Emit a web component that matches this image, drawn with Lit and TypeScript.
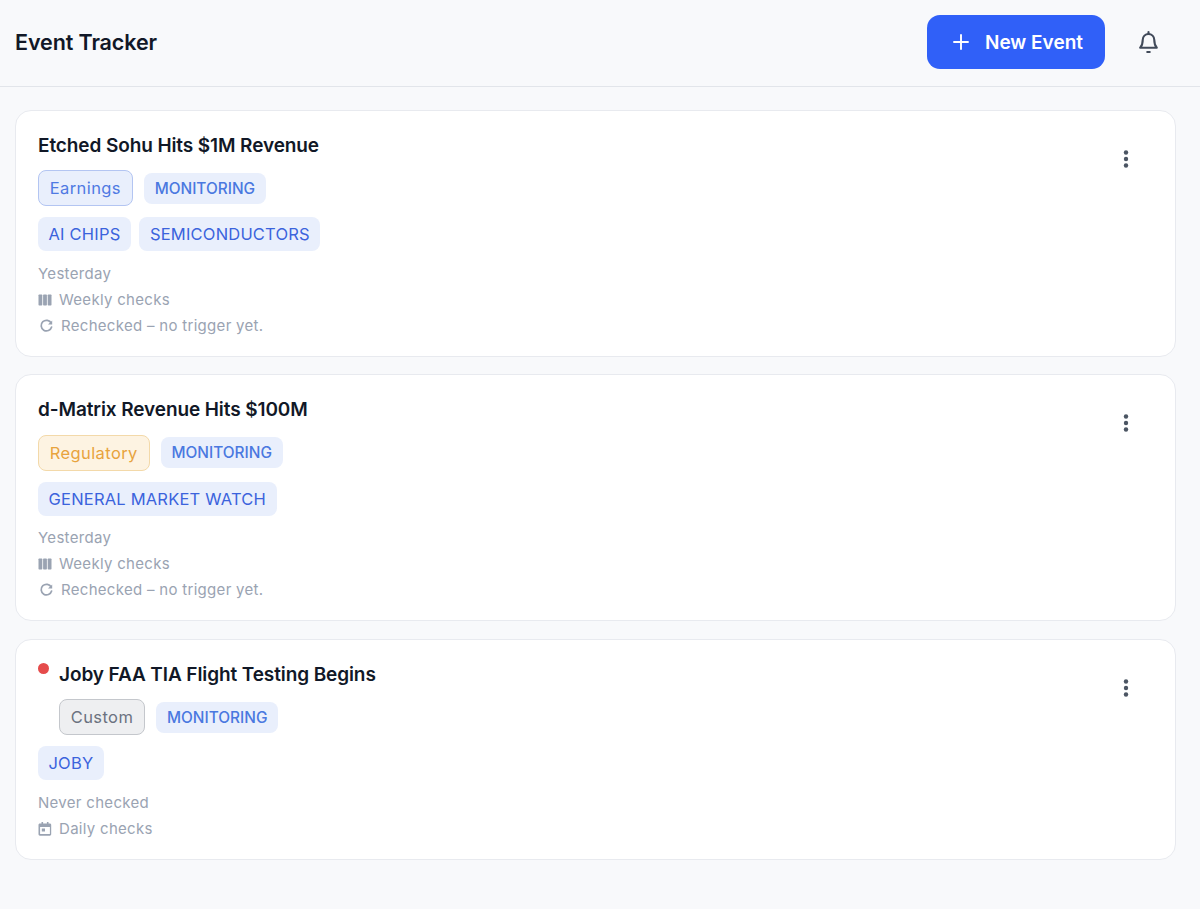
import { LitElement, html, css, svg } from "lit";
import { customElement } from "lit/decorators.js";

type Kind = "earnings" | "regulatory" | "custom";
interface Ev {
  title: string;
  kind: Kind;
  label: string;
  tags: string[];
  when: string;
  freq: string;
  freqIcon: "bars" | "cal";
  note?: string;
  dot?: boolean;
}

const events: Ev[] = [
  { title: "Etched Sohu Hits $1M Revenue", kind: "earnings", label: "Earnings", tags: ["AI CHIPS", "SEMICONDUCTORS"], when: "Yesterday", freq: "Weekly checks", freqIcon: "bars", note: "Rechecked – no trigger yet." },
  { title: "d-Matrix Revenue Hits $100M", kind: "regulatory", label: "Regulatory", tags: ["GENERAL MARKET WATCH"], when: "Yesterday", freq: "Weekly checks", freqIcon: "bars", note: "Rechecked – no trigger yet." },
  { title: "Joby FAA TIA Flight Testing Begins", kind: "custom", label: "Custom", tags: ["JOBY"], when: "Never checked", freq: "Daily checks", freqIcon: "cal", dot: true },
];

const bars = svg`<rect x="0.500" y="1.500" width="3.800" height="11" rx=".7"/><rect x="5.100" y="1.500" width="3.800" height="11" rx=".7"/><rect x="9.700" y="1.500" width="3.800" height="11" rx=".7"/>`;
const cal = svg`<path fill-rule="evenodd" d="M3.500 0h1.600v1.500h3.800V0h1.600v1.500h1.300c.8 0 1.400.6 1.400 1.400v9.400c0 .8-.6 1.400-1.400 1.400H1.900C1.100 13.700.5 13.100.5 12.300V2.900c0-.8.6-1.400 1.400-1.400h1.600V0zM2.100 5v7.100h9.800V5H2.100zM3.800 6.500h3.200v3H3.800z"/>`;

@customElement("app-root")
export class AppRoot extends LitElement {
  static styles = css`
    :host { display: block; min-height: 909px; background: #f8f9fb; font-family: Inter, "Liberation Sans", sans-serif; color: #111827; box-sizing: border-box; }
    .hdr { height: 84px; padding: 0 28px 2px 15px; border-bottom: 1px solid #e2e5ea; display: flex; align-items: center; gap: 19px; }
    .hdr h1 { margin: 0; flex: 1; font-size: 21.500px; font-weight: 600; line-height: 28px; letter-spacing: -0.1px; }
    .new { width: 178px; height: 54px; border: 0; border-radius: 13px; background: #3060f8; color: #fff; font: 600 19px Inter, sans-serif; display: flex; align-items: center; gap: 15px; padding: 0 0 0 25px; }
    .new svg { width: 18px; height: 18px; }
    .bell { width: 48px; height: 48px; display: flex; align-items: center; justify-content: center; }
    .bell svg { width: 19px; height: 22px; }
    .list { display: flex; flex-direction: column; gap: 17.500px; padding: 22.500px 24.500px 0 15px; }
    .card { background: #fff; border: 1px solid #e8eaef; border-radius: 16px; padding: 23px 25px 17px 22px; display: flex; align-items: flex-start; }
    .body { flex: 1; min-width: 0; }
    .title { display: flex; align-items: flex-start; height: 24px; }
    .title h2 { margin: 0; font-size: 19px; line-height: 24px; font-weight: 600; color: #111827; letter-spacing: -0.1px; }
    .dot { width: 11px; height: 11px; border-radius: 50%; background: #e54b4b; margin: 0 10px 0 0; flex: none; }
    .row1 { display: flex; align-items: center; gap: 11px; margin-top: 12.500px; height: 36px; }
    .row1.ind { margin-left: 21px; }
    .kind { height: 36px; box-sizing: border-box; display: flex; align-items: center; padding: 0 10.750px; border-radius: 8px; border: 1px solid; font-size: 16.500px; font-weight: 400; letter-spacing: .4px; }
    .earnings { background: #e9effc; border-color: #b3c5f2; color: #4f7ae3; }
    .regulatory { background: #fdf3e2; border-color: #f3d9a9; color: #e8a33d; }
    .custom { background: #eeeff1; border-color: #c4c7cc; color: #6b7280; }
    .status { height: 31px; display: flex; align-items: center; padding: 0 11px; border-radius: 8px; background: #e9effc; color: #4a78e0; font-size: 15.400px; font-weight: 500; }
    .tags { display: flex; gap: 8.500px; margin-top: 11px; }
    .tag { height: 34px; display: flex; align-items: center; padding: 0 10.500px; border-radius: 8px; background: #e9effc; color: #3b63dc; font-size: 16.500px; font-weight: 400; letter-spacing: .2px; }
    .meta { margin-top: 9.500px; color: #9aa3b2; font-size: 15px; line-height: 26px; letter-spacing: .3px; }
    .line { display: flex; align-items: center; gap: 7px; height: 26px; }
    .line svg { width: 14px; height: 14px; fill: #9aa3b2; flex: none; }
    .line svg.re { width: 16px; height: 16px; fill: none; }
    .kebab { width: 48px; height: 48px; margin-top: 1px; display: flex; align-items: center; justify-content: center; }
    .kebab svg { width: 6px; height: 20px; fill: #4b5563; }
  `;

  private item(e: Ev) {
    return html`<div class="card">
      <div class="body">
        <div class="title">${e.dot ? html`<span class="dot"></span>` : ""}<h2>${e.title}</h2></div>
        <div class="row1 ${e.dot ? "ind" : ""}"><span class="kind ${e.kind}">${e.label}</span><span class="status">MONITORING</span></div>
        <div class="tags">${e.tags.map((t) => html`<span class="tag">${t}</span>`)}</div>
        <div class="meta">
          <div class="line">${e.when}</div>
          <div class="line"><svg viewBox="0 0 14 14">${e.freqIcon === "bars" ? bars : cal}</svg>${e.freq}</div>
          ${e.note ? html`<div class="line"><svg class="re" viewBox="0 0 16 16"><path d="M13.200 5.200A5.300 5.300 0 1 0 13.600 9" stroke="#9aa3b2" stroke-width="1.700" stroke-linecap="round"/><path d="M14.200 2.400v4.200H10z" fill="#9aa3b2"/></svg>${e.note}</div>` : ""}
        </div>
      </div>
      <div class="kebab"><svg viewBox="0 0 6 20"><circle cx="3" cy="3.500" r="2.200"/><circle cx="3" cy="10" r="2.200"/><circle cx="3" cy="16.500" r="2.200"/></svg></div>
    </div>`;
  }

  render() {
    return html`
      <header class="hdr">
        <h1>Event Tracker</h1>
        <button class="new"><svg viewBox="0 0 18 18"><path d="M9 2v14M2 9h14" stroke="#fff" stroke-width="1.900" stroke-linecap="round"/></svg>New Event</button>
        <div class="bell"><svg viewBox="0 0 18 21" fill="none" stroke="#414a59" stroke-width="2" stroke-linecap="round" stroke-linejoin="round"><path d="M9 2.800a5.500 5.500 0 0 0-5.500 5.500c0 4.200-1 6-2.400 7.700h15.800c-1.400-1.700-2.400-3.500-2.400-7.700A5.500 5.500 0 0 0 9 2.800z"/><path d="M9 1v1.800M7.800 20h2.400"/></svg></div>
      </header>
      <main class="list">${events.map((e) => this.item(e))}</main>
    `;
  }
}
